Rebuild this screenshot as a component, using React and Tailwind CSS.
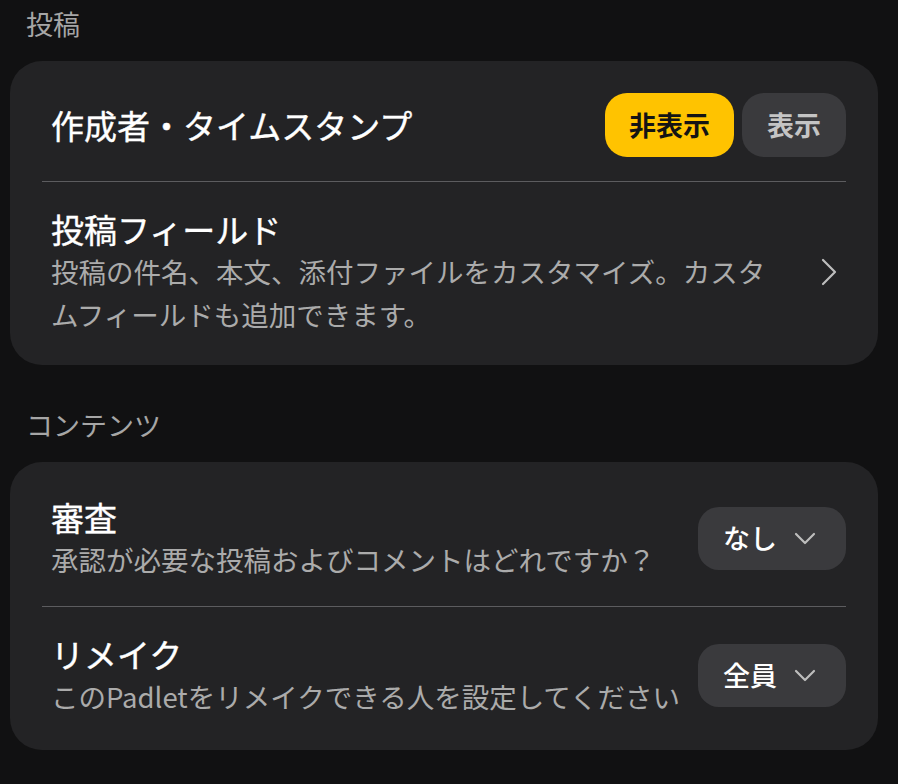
import React from 'react';

const font = { fontFamily: '"Noto Sans CJK JP", "Noto Sans", sans-serif' };

const ChevronRight = () => (
  <svg width="18" height="28" viewBox="0 0 18 28" fill="none" className="shrink-0">
    <path d="M3 2 L15 14 L3 26" stroke="#bdbdbd" strokeWidth="2.2" strokeLinecap="round" strokeLinejoin="round" />
  </svg>
);

const ChevronDown = () => (
  <svg width="22" height="14" viewBox="0 0 22 14" fill="none" className="shrink-0">
    <path d="M2 2 L11 11 L20 2" stroke="#bdbdbd" strokeWidth="2.2" strokeLinecap="round" strokeLinejoin="round" />
  </svg>
);

const SectionLabel = ({ children, className }) => (
  <div className={`pl-[16px] text-[27px] leading-[36px] text-[#a6a6a6] ${className}`}>{children}</div>
);

const Select = ({ value }) => (
  <button className="shrink-0 w-[148px] h-[63px] rounded-[21px] bg-[#3a3a3d] flex items-center justify-between pl-[25px] pr-[30px]">
    <span className="text-[27px] font-medium text-white">{value}</span>
    <ChevronDown />
  </button>
);

export default function App() {
  return (
    <div className="min-h-screen w-full bg-[#111112] pl-[10px] pr-[20px] pt-[6px] pb-8" style={font}>
      {/* 投稿 */}
      <SectionLabel className="mb-[19px]">投稿</SectionLabel>
      <div className="bg-[#232325] rounded-[32px] px-[32px]">
        <div className="flex items-center justify-between pl-[9px] pt-[32px] pb-[24px]">
          <span className="text-[33px] leading-[42px] text-white [-webkit-text-stroke:0.4px_white]">作成者・タイムスタンプ</span>
          <div className="flex gap-2">
            <button className="h-16 px-[24px] rounded-[22px] bg-[#ffc300] text-[27px] font-bold text-[#141414]">非表示</button>
            <button className="h-16 px-[25px] rounded-[22px] bg-[#3a3a3d] text-[27px] font-bold text-[#c4c4c4]">表示</button>
          </div>
        </div>
        <div className="h-px bg-[#5c5c5f]" />
        <div className="flex items-center pl-[9px] pr-[8px] pt-[26px] pb-[29px]">
          <div className="w-[728px]">
            <div className="text-[33px] leading-[42px] text-white [-webkit-text-stroke:0.4px_white]">投稿フィールド</div>
            <div className="text-[27.5px] leading-[43px] text-[#ababab]">
              投稿の件名、本文、添付ファイルをカスタマイズ。カスタムフィールドも追加できます。
            </div>
          </div>
          <div className="flex-1 flex justify-end">
            <ChevronRight />
          </div>
        </div>
      </div>

      {/* コンテンツ */}
      <SectionLabel className="mt-[42px] mb-[19px]">コンテンツ</SectionLabel>
      <div className="bg-[#232325] rounded-[32px] px-[32px]">
        <div className="flex items-center justify-between pl-[9px] pt-[34px] pb-[25px]">
          <div className="min-w-0">
            <div className="text-[33px] leading-[42px] text-white [-webkit-text-stroke:0.4px_white]">審査</div>
            <div className="text-[27.5px] leading-[43px] text-[#ababab] whitespace-nowrap">
              承認が必要な投稿およびコメントはどれですか？
            </div>
          </div>
          <Select value="なし" />
        </div>
        <div className="h-px bg-[#5c5c5f]" />
        <div className="flex items-center justify-between pl-[9px] pt-[26px] pb-[32px]">
          <div className="min-w-0">
            <div className="text-[33px] leading-[42px] text-white [-webkit-text-stroke:0.4px_white]">リメイク</div>
            <div className="text-[27.5px] leading-[43px] text-[#ababab] whitespace-nowrap">
              このPadletをリメイクできる人を設定してください
            </div>
          </div>
          <Select value="全員" />
        </div>
      </div>
    </div>
  );
}
